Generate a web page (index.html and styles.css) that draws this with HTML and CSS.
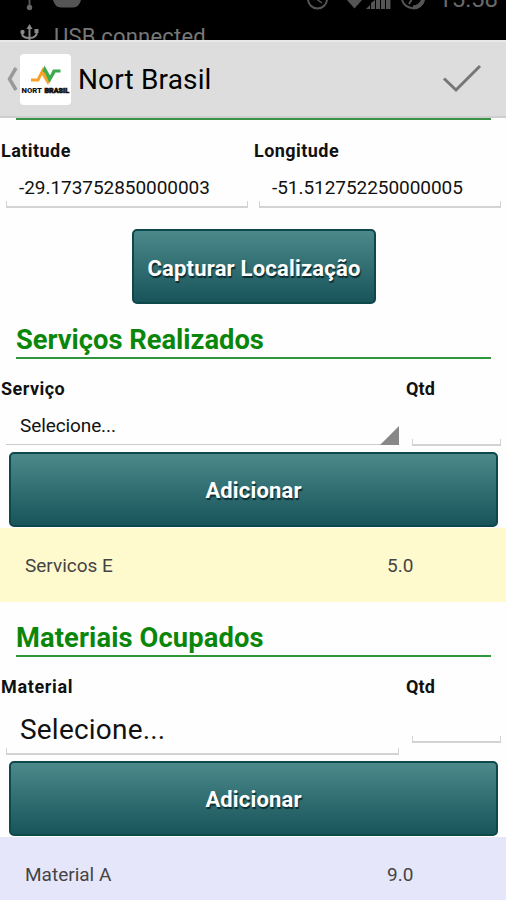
FILE: index.html
```html
<!DOCTYPE html>
<html lang="pt-BR">
<head>
<meta charset="utf-8">
<title>Nort Brasil</title>
<link rel="stylesheet" href="styles.css">
</head>
<body>
<div class="status">
  <svg class="status-icons" width="506" height="40" viewBox="0 0 506 40" fill="none" stroke="#555">
    <path d="M29.500 0V8" stroke-width="2"/><circle cx="29.500" cy="7.500" r="2.700" fill="#666" stroke="none"/>
    <path d="M53 0H81Q79 7.500 73 7.500H61Q55 7.500 53 0Z" fill="#555" stroke="none"/>
    <circle cx="317.500" cy="-1" r="9.500" stroke-width="2"/><path d="M317.500 0L322 3" stroke-width="1.500"/>
    <path d="M347 0H362L354.500 8.500Z" fill="#555" stroke="none"/>
    <path d="M366 9L370 5V9ZM371 9V3L375 0V9ZM376 9V0H380V9ZM381 9V0H385V9ZM386 9V0H390.500V9Z" fill="#555" stroke="none"/>
    <path d="M402 0A11.500 11.500 0 0 0 424 0" stroke-width="2"/><path d="M413 7.500A11 11 0 0 0 423 0" stroke-width="4"/><path d="M409 4L412 -1" stroke-width="2"/>
    <g stroke="#888" stroke-width="2"><path d="M29.500 40V27M22 33Q22 38 29.500 38Q37 38 37 31"/></g>
    <g fill="#888" stroke="none"><path d="M26.500 29L29.500 24L32.500 29Z"/><circle cx="22.500" cy="32" r="2.200"/><path d="M34.500 29H38.500V33H34.500Z"/></g>
  </svg>
  <div class="clock">15:58</div>
  <div class="usb">USB connected</div>
</div>
<header class="bar">
  <svg class="back" width="12" height="26" viewBox="0 0 12 26"><path d="M10 2L3.500 13L10 24" fill="none" stroke="#999" stroke-width="3.500"/></svg>
  <div class="logo">
    <svg width="51" height="51" viewBox="0 0 51 51">
      <path d="M11 24.500H17L23 13L28.500 26L31 24L28 31L22 21L19 27.500H11Z" fill="#f7a128"/>
      <path d="M24.500 11.500L30 21.500L33 15.500H40.500V18.500H35.500L29.500 29L25 19L22.500 17Z" fill="#3bab4f"/>
      <text class="logo-text" x="1.500" y="39" textLength="20.500" lengthAdjust="spacingAndGlyphs">NORT</text>
      <text class="logo-text heavy" x="24.500" y="39" textLength="24.500" lengthAdjust="spacingAndGlyphs">BRASIL</text>
    </svg>
  </div>
  <h1 class="title">Nort Brasil</h1>
  <svg class="check" width="40" height="30" viewBox="0 0 40 30"><path d="M2 14.500L14 26L38 2" fill="none" stroke="#777" stroke-width="3"/></svg>
</header>
<main>
  <div class="rule"></div>
  <section class="coords">
    <div><label>Latitude</label><div class="field">-29.173752850000003</div></div>
    <div><label>Longitude</label><div class="field">-51.512752250000005</div></div>
  </section>
  <button class="btn capture">Capturar Localização</button>
  <h2>Serviços Realizados</h2>
  <div class="labels"><label>Serviço</label><label class="short">Qtd</label></div>
  <div class="inputs"><div class="select">Selecione...</div><div class="field qty"></div></div>
  <button class="btn">Adicionar</button>
  <div class="item service"><span>Servicos E</span><span>5.0</span></div>
  <h2 class="materials">Materiais Ocupados</h2>
  <div class="labels"><label class="wide">Material</label><label class="short">Qtd</label></div>
  <div class="inputs tall"><div class="field big">Selecione...</div><div class="field qty"></div></div>
  <button class="btn">Adicionar</button>
  <div class="item material"><span>Material A</span><span>9.0</span></div>
</main>
</body>
</html>
```
FILE: styles.css
```css
* { box-sizing: border-box; }
body {
  margin: 0;
  width: 506px;
  height: 900px;
  overflow: hidden;
  background: #fefefe;
  color: #111;
  font-family: Roboto, "Liberation Sans", sans-serif;
}
h1, h2 { margin: 0; }
svg { display: block; flex: none; }
.status {
  position: relative;
  height: 40px;
  background: #000;
  overflow: hidden;
}
.status-icons { position: absolute; inset: 0; }
.clock, .usb { position: absolute; white-space: nowrap; }
.clock { right: 8px; top: -16px; color: #6a6a6a; font-size: 24px; line-height: 30px; }
.usb { left: 54px; top: 22px; color: #777; font-size: 22px; line-height: 30px; letter-spacing: .2px; }
.bar {
  display: flex;
  align-items: center;
  height: 78px;
  padding: 0 24px 0 6px;
  background: #ddd;
  border-top: 2px solid #e8e8e8;
  border-bottom: 2px solid #cecece;
}
.back { margin-right: 2px; }
.logo { width: 51px; height: 51px; border-radius: 4px; background: #fff; }
.logo-text { font-size: 7.5px; font-weight: 900; fill: #111; }
.heavy { stroke: #111; stroke-width: .7px; }
.title { flex: 1; margin-left: 7px; padding-top: 1px; font-size: 28px; font-weight: 400; line-height: 40px; letter-spacing: .15px; color: #000; }
.rule { height: 2px; margin: 0 15px 0 16px; background: #3b9246; }
.coords { display: grid; grid-template-columns: 1fr 1fr; padding-top: 19px; }
label { display: block; padding-left: 1px; font-size: 18px; font-weight: 700; line-height: 24px; letter-spacing: .45px; }
.short { letter-spacing: .1px; }
.wide { letter-spacing: .65px; }
.field {
  position: relative;
  height: 43px;
  margin: 2px 5px 0 6px;
  padding-left: 13px;
  border-bottom: 2px solid #d3d3d3;
  font-size: 19px;
  line-height: 45px;
  letter-spacing: -.05px;
}
.field::before {
  content: "";
  position: absolute;
  left: 0;
  right: 0;
  bottom: 0;
  height: 5px;
  border: solid #d3d3d3;
  border-width: 0 1px;
}
.btn {
  display: block;
  width: 489px;
  height: 75px;
  margin: 0 0 0 9px;
  padding: 2px 0 0;
  border: 2px solid #0e484b;
  border-radius: 5px;
  background: linear-gradient(#4b898b, #18545a);
  color: #fff;
  font: 700 22px/70px Roboto, "Liberation Sans", sans-serif;
  letter-spacing: .15px;
  text-shadow: 1px 2px 1px #0b2c30;
}
.capture { width: 244px; margin: 21px 0 0 132px; padding-top: 3px; letter-spacing: .2px; }
h2 {
  height: 55px;
  margin: 0 15px 0 16px;
  padding-top: 18px;
  border-bottom: 2px solid #2f963a;
  color: #0a870a;
  font-size: 27.3px;
  line-height: 36px;
}
.materials { letter-spacing: .12px; }
.labels, .inputs { display: grid; grid-template-columns: 405px 1fr; }
.labels { padding-top: 18px; }
.inputs { height: 51px; align-items: start; }
.select {
  position: relative;
  height: 42px;
  margin: 2px 6px 0;
  padding-left: 14px;
  border-bottom: 1px solid #ccc;
  font-size: 19px;
  line-height: 45px;
  letter-spacing: -.1px;
}
.select::after {
  content: "";
  position: absolute;
  right: 0;
  bottom: -1px;
  width: 19px;
  height: 19px;
  background: #888;
  clip-path: polygon(100% 0, 100% 100%, 0 100%);
}
.qty { margin-left: 7px; }
.tall { height: 62px; }
.tall .qty { height: 42px; }
.big { height: 54px; margin-right: 6px; padding-left: 14px; font-size: 28px; line-height: 57px; letter-spacing: .2px; }
.item {
  display: grid;
  grid-template-columns: 362px 1fr;
  height: 74px;
  margin-top: 1px;
  padding-left: 25px;
  font-size: 19px;
  line-height: 76px;
  color: #444;
}
.service { background: #fffacd; }
.material { background: #e6e6fa; }
```
